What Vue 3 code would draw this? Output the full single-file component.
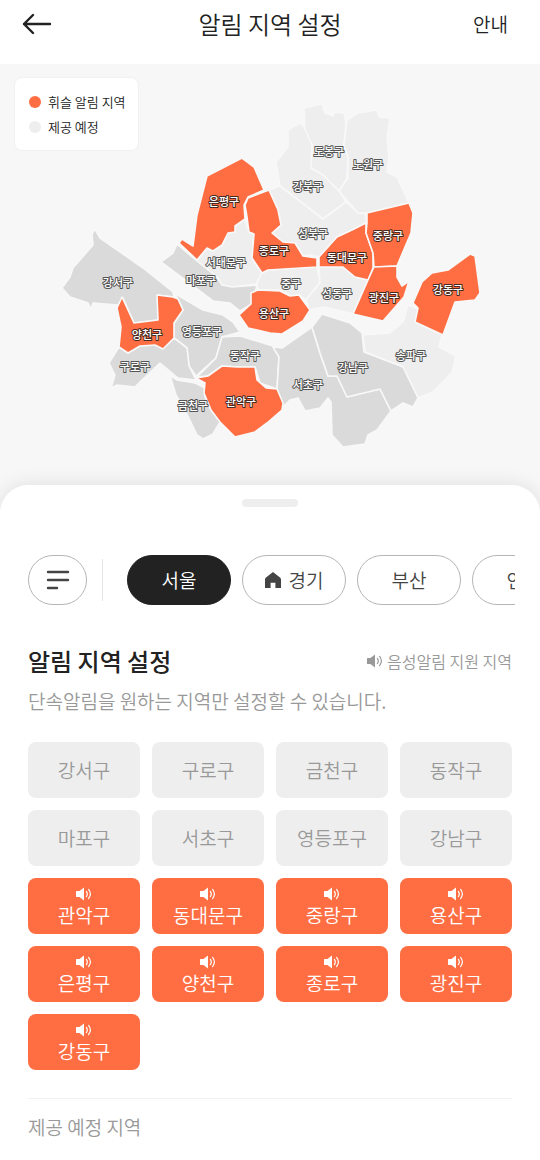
<template>
  <div class="page">
    <header class="top-bar">
      <button type="button" class="back-btn" aria-label="뒤로">
        <svg viewBox="0 0 30 22" width="30" height="22" fill="none" stroke="#222" stroke-width="2.4" stroke-linecap="round" stroke-linejoin="round">
          <path d="M28 11H2M11 2 2 11l9 9" />
        </svg>
      </button>
      <h1 class="top-title">알림 지역 설정</h1>
      <a href="#guide" class="guide-link">안내</a>
    </header>

    <section class="map-area">
      <svg class="map" viewBox="0 64 540 448" role="group" aria-label="서울">
        <polygon
          v-for="d in districts"
          :key="d.name"
          :points="d.points"
          class="district"
          :class="stateOf(d.name)"
        />
        <text
          v-for="d in districts"
          :key="d.name + '-label'"
          :x="d.x"
          :y="d.y + 4"
          class="district-label"
          :class="stateOf(d.name)"
        >{{ d.name }}</text>
      </svg>

      <ul class="legend">
        <li><span class="dot active"></span>휘슬 알림 지역</li>
        <li><span class="dot"></span>제공 예정</li>
      </ul>
    </section>

    <main class="sheet">
      <div class="handle"></div>

      <nav class="filters">
        <button type="button" class="chip menu" aria-label="전체 지역">
          <svg viewBox="0 0 24 22" width="24" height="22" fill="none" stroke="#444" stroke-width="2.4" stroke-linecap="round">
            <path d="M2 3h20M2 11h20M2 19h9" />
          </svg>
        </button>
        <span class="divider"></span>
        <div class="chip-list">
          <button
            v-for="city in cities"
            :key="city.name"
            type="button"
            class="chip"
            :class="{ selected: city.name === currentCity }"
            @click="currentCity = city.name"
          >
            <svg v-if="city.home" viewBox="0 0 16 16" width="16" height="16" fill="#444">
              <path d="M8 0 1 5.4Q0 6.2 0 7.4V16h5.6v-5.2h4.8V16H16V7.4q0-1.2-1-2z" />
            </svg>
            {{ city.name }}
          </button>
        </div>
      </nav>

      <div class="section-head">
        <h2>알림 지역 설정</h2>
        <p class="voice-note">
          <svg class="speaker" viewBox="0 0 16 14" width="16" height="14">
            <path d="M0 4.6Q0 4 .6 4H3.4L8 .6v12.8L3.4 10H.6Q0 10 0 9.4z" fill="currentColor" />
            <path d="M10.4 4.4q1.8 2.6 0 5.2M12.6 2.4q3.6 4.6 0 9.2" fill="none" stroke="currentColor" stroke-width="1.2" stroke-linecap="round" />
          </svg>
          음성알림 지원 지역
        </p>
      </div>
      <p class="description">단속알림을 원하는 지역만 설정할 수 있습니다.</p>

      <div class="region-grid">
        <button
          v-for="name in regions"
          :key="name"
          type="button"
          class="region"
          :class="{ active: enabled.includes(name) }"
          :aria-pressed="enabled.includes(name)"
          @click="toggle(name)"
        >
          <svg v-if="voiceRegions.includes(name)" class="speaker" viewBox="0 0 16 14" width="16" height="14">
            <path d="M0 4.6Q0 4 .6 4H3.4L8 .6v12.8L3.4 10H.6Q0 10 0 9.4z" fill="currentColor" />
            <path d="M10.4 4.4q1.8 2.6 0 5.2M12.6 2.4q3.6 4.6 0 9.2" fill="none" stroke="currentColor" stroke-width="1.2" stroke-linecap="round" />
          </svg>
          <span>{{ name }}</span>
        </button>
      </div>

      <h3 class="next-title">제공 예정 지역</h3>
    </main>
  </div>
</template>

<script setup>
import { ref } from 'vue';

const cities = [
  { name: '서울' },
  { name: '경기', home: true },
  { name: '부산' },
  { name: '인천' }
];
const currentCity = ref('서울');

const voiceRegions = ['관악구', '동대문구', '중랑구', '용산구', '은평구', '양천구', '종로구', '광진구', '강동구'];
const regions = ['강서구', '구로구', '금천구', '동작구', '마포구', '서초구', '영등포구', '강남구', ...voiceRegions];
const enabled = ref([...voiceRegions]);

const toggle = (name) => {
  enabled.value = enabled.value.includes(name)
    ? enabled.value.filter((n) => n !== name)
    : [...enabled.value, name];
};

// active: alert on, off: available but not chosen, upcoming: not served yet
const stateOf = (name) => {
  if (enabled.value.includes(name)) return 'active';
  return regions.includes(name) ? 'off' : 'upcoming';
};

const districts = [
  { name: '도봉구', x: 329, y: 152, points: '304,108 322,104 325,113 333,116 335,112 344,113 346,123 344,145 348,157 347,178 339,191 323,175 311,168 312,145 305,132' },
  { name: '노원구', x: 368, y: 165, points: '347,120 358,113 377,110 379,117 390,118 387,137 389,157 387,172 397,177 409,203 367,213 358,213 339,191 348,178 348,157 344,145' },
  { name: '강북구', x: 308, y: 187, points: '276,162 288,147 288,130 300,123 304,127 312,145 311,168 323,175 339,191 346,202 323,219 280,186' },
  { name: '성북구', x: 313, y: 234, points: '269,190 280,186 323,219 346,202 358,213 366,214 366,223 352,230 337,237 319,257 311,255 303,256 295,243 283,242 272,233 281,225 278,210' },
  { name: '서대문구', x: 226, y: 263, points: '245,219 249,232 254,234 252,258 262,273 256,284 232,287 222,285 217,277 197,261 207,248 213,251 222,245 228,233 235,232 235,226' },
  { name: '중구', x: 291, y: 284, points: '262,273 268,270 317,267 320,282 306,300 299,295 290,296 280,290 258,290 257,283' },
  { name: '성동구', x: 337, y: 294, points: '319,267 343,267 355,277 368,280 354,314 323,307 309,310 306,300 320,283' },
  { name: '송파구', x: 411, y: 356, points: '408,305 418,309 416,322 442,335 439,347 456,356 452,372 433,392 418,398 403,367 365,352 363,335 390,333 403,322' },
  { name: '강서구', x: 118, y: 283, points: '95,229 100,238 143,268 173,292 174,297 158,295 158,320 134,323 123,298 118,305 93,303 91,309 88,303 70,297 62,288 70,277 73,268 93,245 92,234' },
  { name: '마포구', x: 201, y: 281, points: '177,244 197,261 217,277 222,285 232,287 257,285 252,304 240,311 230,303 213,301 161,262 173,253' },
  { name: '영등포구', x: 202, y: 332, points: '174,293 203,310 223,315 233,322 240,332 222,337 216,358 196,376 189,366 187,348 174,338 174,323 183,310 178,299' },
  { name: '구로구', x: 135, y: 367, points: '174,338 187,348 189,366 196,380 178,378 160,363 142,380 135,387 117,385 111,388 115,375 109,363 119,347 128,353 140,346 155,345 163,348' },
  { name: '금천구', x: 193, y: 406, points: '170,375 177,380 195,383 205,388 205,397 211,410 220,422 213,434 203,439 197,435 185,410 176,395' },
  { name: '동작구', x: 245, y: 356, points: '222,337 240,336 273,346 279,357 277,389 260,383 255,367 237,367 222,366 208,376 197,377 216,358' },
  { name: '서초구', x: 308, y: 385, points: '273,347 282,348 312,327 320,353 328,376 337,376 347,397 380,389 391,411 377,430 368,435 365,444 343,447 332,435 331,402 328,398 320,408 305,411 298,398 290,400 283,407 277,389 279,357' },
  { name: '강남구', x: 353, y: 368, points: '322,314 350,323 362,333 364,352 403,367 418,398 413,407 403,403 391,411 380,389 347,397 337,376 328,376 320,353 312,327' },
  { name: '은평구', x: 224, y: 202, points: '242,158 254,167 264,190 248,197 244,205 245,219 235,226 235,232 228,233 222,245 213,251 207,248 197,260 179,243 182,239 193,246 197,215 207,176' },
  { name: '종로구', x: 274, y: 251, points: '269,190 248,198 245,205 247,217 249,232 254,234 252,258 262,273 268,270 317,267 317,258 303,256 295,243 283,242 272,233 281,225 278,210' },
  { name: '동대문구', x: 347, y: 258, points: '366,223 366,233 373,253 373,268 368,280 355,277 343,267 319,267 319,257 337,237 352,230' },
  { name: '중랑구', x: 388, y: 236, points: '367,213 409,203 413,213 411,233 405,247 397,266 374,267 373,253 366,233 367,223' },
  { name: '광진구', x: 384, y: 298, points: '374,267 397,266 397,277 402,286 409,281 404,297 383,321 353,314 368,280' },
  { name: '강동구', x: 448, y: 290, points: '470,254 475,256 480,293 475,300 455,302 443,335 415,322 418,308 413,303 422,282 432,273 448,270' },
  { name: '용산구', x: 274, y: 314, points: '251,293 258,290 280,291 290,296 299,295 310,310 303,321 282,334 270,333 248,328 239,315 251,304' },
  { name: '양천구', x: 147, y: 335, points: '122,297 134,323 158,320 157,295 173,297 178,299 183,310 174,323 174,338 163,349 155,345 140,346 128,353 119,347 121,327 117,308' },
  { name: '관악구', x: 241, y: 402, points: '196,378 208,376 222,366 237,367 255,367 257,380 266,388 277,389 283,403 282,410 267,423 255,432 235,437 220,422 211,410 204,393 205,383' }
];
</script>

<style>
body {
  margin: 0;
  background: #fff;
}
</style>

<style scoped>
.page {
  font-family: "Noto Sans CJK KR", "Noto Sans CJK JP", sans-serif;
  font-weight: 350;
  color: #222;
  overflow: hidden;
}

h1,
h2,
h3,
p,
ul {
  margin: 0;
  padding: 0;
}

button {
  font-family: inherit;
  font-weight: inherit;
  cursor: pointer;
}

/* Top bar */
.top-bar {
  display: grid;
  grid-template-columns: 1fr auto 1fr;
  align-items: center;
  height: 64px;
  box-sizing: border-box;
  padding: 0 32px 16px 22px;
}

.back-btn {
  display: flex;
  justify-self: start;
  padding: 0;
  border: 0;
  background: none;
}

.top-title {
  padding-left: 10px;
  font-size: 24px;
  font-weight: 350;
  line-height: 32px;
}

.guide-link {
  justify-self: end;
  font-size: 19px;
  line-height: 28px;
  color: inherit;
  text-decoration: none;
}

/* Map */
.map-area {
  position: relative;
  background: #f7f7f7;
}

.map {
  display: block;
  width: 100%;
}

.district {
  stroke: #f8f8f8;
  stroke-width: 1.6;
  stroke-linejoin: round;
}

.district.active {
  fill: #ff6e43;
}

.district.off {
  fill: #dadada;
}

.district.upcoming {
  fill: #eee;
}

.district-label {
  font-size: 11px;
  font-weight: 500;
  text-anchor: middle;
  fill: #fff;
  stroke: #555;
  stroke-width: 2;
  stroke-linejoin: round;
  paint-order: stroke;
}

.district-label.active {
  fill: #fff;
  stroke: #4a2a20;
}

.district-label.off,
.district-label.upcoming {
  fill: #fff;
}

.legend {
  position: absolute;
  top: 13px;
  left: 14px;
  padding: 11px 12px 11px 14px;
  border: 1px solid #f1f1f1;
  border-radius: 8px;
  background: #fff;
  list-style: none;
  font-size: 13px;
  line-height: 25px;
}

.legend li {
  display: flex;
  align-items: center;
  gap: 7px;
}

.dot {
  width: 12px;
  height: 12px;
  border-radius: 50%;
  background: #eee;
}

.dot.active {
  background: #ff6e43;
}

/* Bottom sheet */
.sheet {
  position: relative;
  margin-top: -27px;
  padding: 14px 28px 20px;
  border-radius: 28px 28px 0 0;
  background: #fff;
  box-shadow: 0 0 20px rgba(0, 0, 0, 0.1);
}

.handle {
  width: 56px;
  height: 8px;
  margin: 0 auto 48px;
  border-radius: 4px;
  background: #eee;
}

.filters {
  display: flex;
  align-items: center;
  margin-right: -3px;
}

.chip {
  display: flex;
  flex: none;
  align-items: center;
  justify-content: center;
  gap: 8px;
  width: 104px;
  height: 50px;
  padding: 0;
  border: 1px solid #b5b5b5;
  border-radius: 25px;
  background: #fff;
  color: #444;
  font-size: 19px;
  line-height: 28px;
}

.chip.menu {
  width: 59px;
}

.chip.selected {
  border-color: #222;
  background: #222;
  color: #fff;
}

.divider {
  flex: none;
  width: 1px;
  height: 42px;
  margin: 0 24px 0 15px;
  background: #e5e5e5;
}

.chip-list {
  display: flex;
  flex: 1;
  gap: 11px;
  min-width: 0;
  overflow: hidden;
}

.section-head {
  display: flex;
  align-items: center;
  justify-content: space-between;
  margin-top: 38px;
}

.section-head h2 {
  font-size: 24px;
  font-weight: 500;
  line-height: 36px;
}

.voice-note {
  display: flex;
  align-items: center;
  gap: 4px;
  color: #999;
  font-size: 16px;
  line-height: 24px;
}

.description {
  margin-top: 8px;
  color: #999;
  font-size: 19px;
  line-height: 28px;
}

.region-grid {
  display: grid;
  grid-template-columns: repeat(4, 1fr);
  gap: 12px;
  margin-top: 27px;
}

.region {
  display: flex;
  flex-direction: column;
  align-items: center;
  justify-content: center;
  height: 56px;
  padding: 0;
  border: 0;
  border-radius: 8px;
  background: #eee;
  color: #999;
  font-size: 19px;
  line-height: 28px;
}

.region.active {
  background: #ff6e43;
  color: #fff;
}

.region .speaker {
  margin-top: 4px;
}

.next-title {
  margin-top: 28px;
  padding-top: 14px;
  border-top: 1px solid #f1f1f1;
  color: #999;
  font-size: 19px;
  font-weight: 350;
  line-height: 28px;
}
</style>
